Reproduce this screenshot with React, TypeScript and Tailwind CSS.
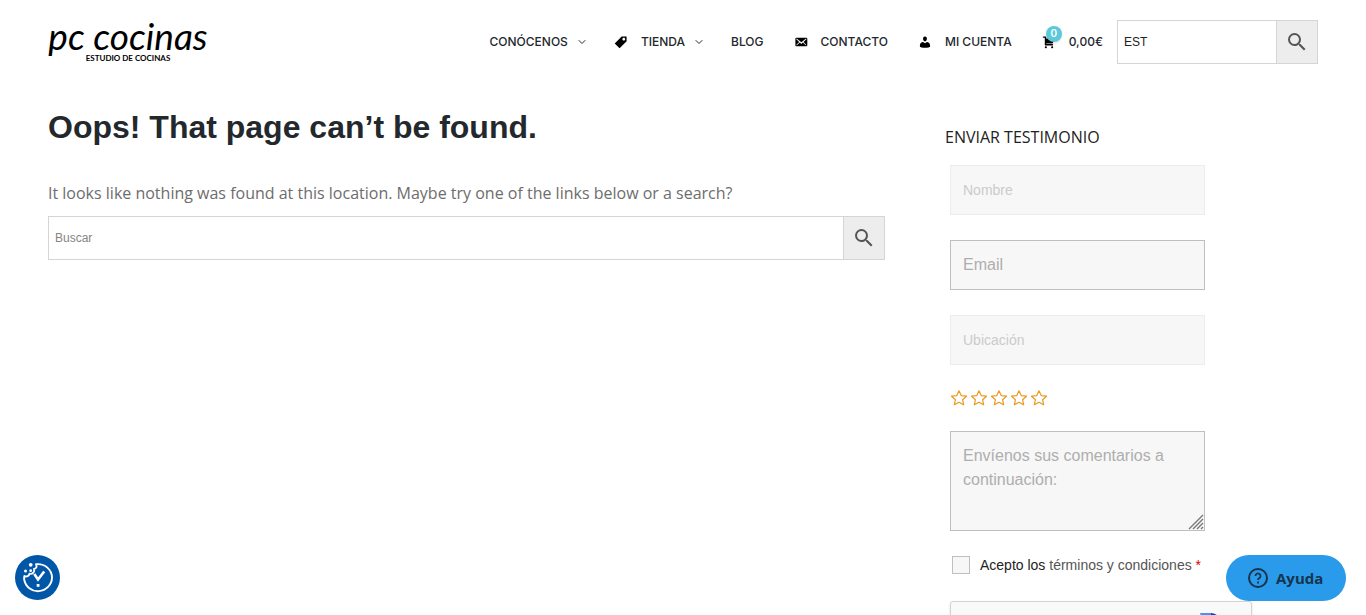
import React from 'react';
import { ChevronDown } from 'lucide-react';
import { MdSearch } from 'react-icons/md';

const icons = {
  tag: 'M11 2h7v7L8 19l-7-7L11 2zm3 6c1.1 0 2-.9 2-2s-.9-2-2-2-2 .9-2 2 .9 2 2 2z',
  mail: 'M19 14.5v-9c0-.83-.67-1.5-1.5-1.5H3.49c-.83 0-1.5.67-1.5 1.5v9c0 .83.67 1.5 1.5 1.5H17.5c.83 0 1.5-.67 1.5-1.5zm-1.31-9.11c.33.33.15.67-.03.84L13.6 9.95l3.9 4.06c.12.14.2.36.06.51-.13.16-.43.15-.56.05l-4.37-3.73-2.14 1.95-2.13-1.95-4.37 3.73c-.13.1-.43.11-.56-.05-.14-.15-.06-.37.06-.51l3.9-4.06-4.06-3.72c-.18-.17-.36-.51-.03-.84s.67-.17.95.07l6.24 5.04 6.25-5.04c.28-.24.62-.4.95-.07z',
  user: 'M10 9.25c-2.27 0-2.73-3.44-2.73-3.44C7 4.02 7.82 2 9.97 2c2.16 0 2.98 2.02 2.71 3.81 0 0-.41 3.44-2.68 3.44zm0 2.57L12.72 10c2.39 0 4.52 2.33 4.52 4.53v2.49s-3.65 1.13-7.24 1.13c-3.65 0-7.24-1.13-7.24-1.13v-2.49c0-2.25 1.94-4.48 4.47-4.48z',
  cart: 'M6 13h9c.55 0 1 .45 1 1s-.45 1-1 1H5c-.55 0-1-.45-1-1V4H2c-.55 0-1-.45-1-1s.45-1 1-1h3c.55 0 1 .45 1 1v2h13l-4 7H6v1zm-.5 3c.83 0 1.5.67 1.5 1.5S6.33 19 5.5 19 4 18.33 4 17.5 4.67 16 5.5 16zm9 0c.83 0 1.5.67 1.5 1.5s-.67 1.5-1.5 1.5-1.5-.67-1.5-1.5.67-1.5 1.5-1.5z'
};

const NavIcon: React.FC<{ path: string }> = ({ path }) => (
  <svg viewBox="0 0 20 20" className="w-[14px] h-[14px] fill-black" aria-hidden="true">
    <path d={path} />
  </svg>
);

const navItems = [
  { label: 'CONÓCENOS', menu: true },
  { label: 'TIENDA', icon: icons.tag, menu: true },
  { label: 'BLOG' },
  { label: 'CONTACTO', icon: icons.mail },
  { label: 'MI CUENTA', icon: icons.user }
];

const SearchForm: React.FC<{ id: string; value?: string; placeholder?: string }> = ({ id, value, placeholder }) => (
  <form className="flex w-full h-11 border border-[#d5d5d5] bg-white" onSubmit={(e) => e.preventDefault()}>
    <input
      id={id}
      type="text"
      aria-label="Buscar"
      defaultValue={value}
      placeholder={placeholder}
      className="flex-1 min-w-0 px-[6px] text-xs text-[#222] placeholder:text-[#858585] outline-none"
    />
    <button type="submit" aria-label="Buscar" className="flex items-center justify-center w-[41px] bg-[#ededed] border-l border-[#d5d5d5]">
      <MdSearch className="w-6 h-6 text-[#555]" />
    </button>
  </form>
);

const Header: React.FC = () => (
  <header className="flex items-center justify-between px-12 h-[84px]">
    <a href="#" className="flex flex-col items-center gap-1 w-40 text-black">
      <span className="font-['Lato'] italic text-[37px] leading-7 whitespace-nowrap">pc cocinas</span>
      <span className="font-['Lato'] font-bold text-[8px] leading-[8px] whitespace-nowrap">ESTUDIO DE COCINAS</span>
    </a>

    <div className="flex items-center">
      <nav className="flex items-center gap-[30px] mr-[30px] font-['Inter'] font-medium text-xs text-[#23282d]">
        {navItems.map((item) => (
          <a key={item.label} href="#" className="flex items-center whitespace-nowrap">
            {item.icon && (
              <span className="mr-[13px]">
                <NavIcon path={item.icon} />
              </span>
            )}
            {item.label}
            {item.menu && <ChevronDown className="w-3 h-3 ml-2 -mr-1" />}
          </a>
        ))}
      </nav>
      <a href="#" className="relative flex items-center gap-[13px] mr-[14px] font-['Inter'] font-medium text-xs text-[#23282d]">
        <NavIcon path={icons.cart} />
        <span className="absolute left-1 -top-2 flex items-center justify-center w-4 h-4 rounded-full bg-[#5bc9d9] text-white text-[10px] font-semibold shadow-sm">
          0
        </span>
        0,00€
      </a>
      <div className="w-[201px]">
        <SearchForm id="header-search" value="EST" />
      </div>
    </div>
  </header>
);

const Star: React.FC = () => (
  <svg viewBox="0 0 20 20" className="w-5 h-5" fill="none" stroke="#eb9a20" strokeWidth="1.2" strokeLinejoin="round" aria-hidden="true">
    <path d="M9 2.8l2.2 4.8 5.3.6-3.9 3.5 1.1 5.1L9 14.2l-4.7 2.6 1.1-5.1-3.9-3.5 5.3-.6z" />
  </svg>
);

const fieldBase = 'block w-full h-[50px] px-3 border bg-[#f7f7f7] outline-none';
const fieldLight = `${fieldBase} border-[#ececec] text-sm placeholder:text-[#cbcbcb]`;
const fieldDark = `${fieldBase} border-[#bfbfbf] text-base placeholder:text-[#aeaeae]`;

const TestimonialForm: React.FC = () => (
  <form className="pl-[5px]" onSubmit={(e) => e.preventDefault()}>
    <div className="flex flex-col gap-[25px] w-[255px]">
      <input type="text" aria-label="Nombre" placeholder="Nombre" className={fieldLight} />
      <input type="email" aria-label="Email" placeholder="Email" className={fieldDark} />
      <input type="text" aria-label="Ubicación" placeholder="Ubicación" className={fieldLight} />
    </div>
    <div className="flex mt-[23px] h-5">
      {[1, 2, 3, 4, 5].map((n) => (
        <button key={n} type="button" aria-label={`${n}`}>
          <Star />
        </button>
      ))}
    </div>
    <div className="relative w-[255px] mt-[23px]">
      <textarea
        aria-label="Envíenos sus comentarios a continuación:"
        placeholder="Envíenos sus comentarios a continuación:"
        className="block w-full h-[100px] px-3 py-3 border border-[#bfbfbf] bg-[#f7f7f7] text-base leading-6 placeholder:text-[#aeaeae] resize-none outline-none"
      />
      <svg viewBox="0 0 16 16" className="absolute right-[1px] bottom-[1px] w-4 h-4" stroke="#77777c" strokeWidth="1.4" aria-hidden="true">
        <path d="M1 15L15 1M5 15L15 5M9 15l6-6M13 15l2-2" />
      </svg>
    </div>
    <div className="flex items-center mt-6 h-5 pl-[2px] text-sm text-[#222]">
      <input id="terms" type="checkbox" className="appearance-none w-[18px] h-[18px] mr-[10px] border border-[#bfbfbf] bg-[#f7f7f7]" />
      <label htmlFor="terms">
        Acepto los <a href="#" className="text-[#555]">términos y condiciones</a> <span className="text-[#d00]">*</span>
      </label>
    </div>
    <div className="mt-[26px] w-[302px] h-[76px] pt-[10px] pr-6 flex justify-end items-start border border-[#d3d3d3] rounded-[3px] bg-[#f9f9f9] shadow-sm">
      <svg viewBox="0 0 32 32" className="w-8 h-8" aria-hidden="true">
        <path d="M5 1h11v8a8 8 0 0 0-7 7z" fill="#4a90f5" />
        <path d="M16 1a15 15 0 0 1 11 7l3-3v12H18l4-5a8 8 0 0 0-6-3z" fill="#1c3aa9" />
        <path d="M2 16h7a8 8 0 0 0 13 5l5 5A14 14 0 0 1 2 16z" fill="#ababab" />
      </svg>
    </div>
  </form>
);

const App: React.FC = () => {
  return (
    <div className="h-screen overflow-x-hidden bg-white font-['Liberation_Sans',sans-serif]">
      <Header />

      <main className="grid grid-cols-[837fr_373fr] gap-[60px] px-12">
        <section className="pt-[23px]">
          <h1 className="text-[32px] leading-10 font-bold text-[#23282d]">Oops! That page can’t be found.</h1>
          <p className="mt-8 mb-[9px] font-['Open_Sans'] text-base leading-7 text-[#6d6d6d]">
            It looks like nothing was found at this location. Maybe try one of the links below or a search?
          </p>
          <SearchForm id="page-search" placeholder="Buscar" />
        </section>

        <aside className="pt-10">
          <h2 className="mb-[15px] font-['Open_Sans'] font-medium text-base leading-[26px] text-[#222]">ENVIAR TESTIMONIO</h2>
          <TestimonialForm />
        </aside>
      </main>

      <button type="button" aria-label="Cookies" className="fixed left-[15px] bottom-[15px] w-[45px] h-[45px] rounded-full bg-[#0056a7]">
        <svg viewBox="0 0 45 45" className="w-full h-full" fill="none" stroke="#fff" aria-hidden="true">
          <path d="M21 9.2c9-1 16 5.6 16 13.5A14 14 0 0 1 9.2 24.5c-.2-1.5-.1-2.4.2-3.5 2.2 1 4.6.2 5-2.2 3.6.4 5.6-2 4.6-4.8 2.5-.4 3.3-2.7 2-4.8z" strokeWidth="1.9" strokeLinejoin="round" />
          <path d="M19.3 19l3.7 5.500 6.200-8" strokeWidth="2.6" />
          <path d="M21.700 29h2.800v2.800h-2.800z" fill="#fff" stroke="none" />
          <g fill="#fff" stroke="none">
            <circle cx="15.7" cy="9.8" r="1.9" />
            <circle cx="10.5" cy="16" r="1.5" />
            <circle cx="15.7" cy="15.7" r="1.4" />
          </g>
        </svg>
      </button>

      <button type="button" className="fixed right-5 bottom-[14px] flex items-center gap-2 h-[46px] w-[120px] pl-[22px] rounded-full bg-[#299bea] text-[#17344c]">
        <svg viewBox="0 0 20 20" className="w-5 h-5" fill="none" stroke="currentColor" strokeWidth="2" aria-hidden="true">
          <circle cx="10" cy="10" r="9" />
          <path d="M7.5 8a2.5 2.5 0 1 1 3.8 2.1c-.9.5-1.3.9-1.3 1.9M10 13.5v2" strokeWidth="1.8" />
        </svg>
        <span className="font-['Open_Sans'] font-bold text-[15px]">Ayuda</span>
      </button>
    </div>
  );
};

export default App;
